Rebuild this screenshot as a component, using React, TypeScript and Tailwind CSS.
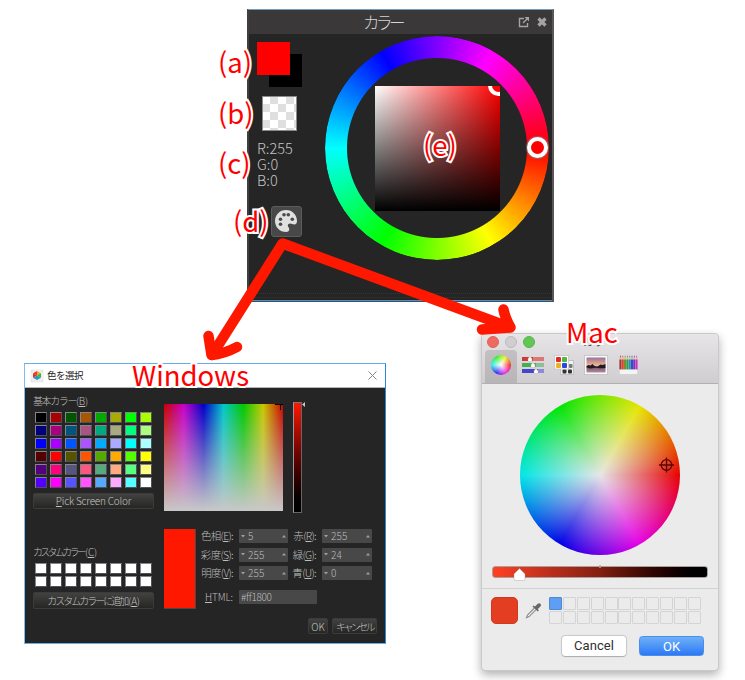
import React from "react";
import clsx from "clsx";

// Qt's 48 standard colours, row by row
const basicColors = [
  "#000000", "#aa0000", "#005500", "#aa5500", "#00aa00", "#aaaa00", "#00ff00", "#aaff00",
  "#00007f", "#aa007f", "#00557f", "#aa557f", "#00aa7f", "#aaaa7f", "#00ff7f", "#aaff7f",
  "#0000ff", "#aa00ff", "#0055ff", "#aa55ff", "#00aaff", "#aaaaff", "#00ffff", "#aaffff",
  "#550000", "#ff0000", "#555500", "#ff5500", "#55aa00", "#ffaa00", "#55ff00", "#ffff00",
  "#55007f", "#ff007f", "#55557f", "#ff557f", "#55aa7f", "#ffaa7f", "#55ff7f", "#ffff7f",
  "#5500ff", "#ff00ff", "#5555ff", "#ff55ff", "#55aaff", "#ffaaff", "#55ffff", "#ffffff",
];

const customColors = Array.from({ length: 16 }, () => "#ffffff");

const hsvRows = [
  { left: "色相", leftKey: "E", leftValue: "5", right: "赤", rightKey: "R", rightValue: "255" },
  { left: "彩度", leftKey: "S", leftValue: "255", right: "緑", rightKey: "G", rightValue: "24" },
  { left: "明度", leftKey: "V", leftValue: "255", right: "青", rightKey: "U", rightValue: "0" },
];

const pencils = ["#a8323c", "#d8482c", "#7c8c30", "#2fa050", "#2c8fa0", "#2c50c8", "#7a34c8", "#d030c0"];

const PaletteIcon = () => (
  <svg width="22" height="22" viewBox="0 0 22 22">
    <path
      d="M11 0C4.9 0 0 4.900 0 11s4.900 11 11 11c2.200 0 3.300-1.200 3.300-2.700 0-1.900-1.500-2-1.500-3.800 0-1.300 1-2 2.400-2 1.500 0 2.300.9 4.100.9 1.700 0 2.700-1.200 2.700-3.400C22 4.900 17.100 0 11 0Z"
      fill="#e0e0e0"
    />
    <g fill="#4a4a4a">
      <circle cx="9" cy="4.800" r="1.800" />
      <circle cx="13.300" cy="4.800" r="1.800" />
      <circle cx="5.500" cy="9.200" r="1.800" />
      <circle cx="17.300" cy="9.200" r="1.800" />
      <circle cx="5.500" cy="14.300" r="1.800" />
    </g>
  </svg>
);

const ColorPanel = () => (
  <section className="absolute left-[247px] top-[9px] flex h-[293px] w-[307px] flex-col border-t border-r-2 border-b border-l-2 border-t-[#6f9fc6] border-r-[#585858] border-b-[#4c4c50] border-l-[#403f40] bg-[#252525]">
    <header className="flex h-6 shrink-0 items-center bg-[#3a3838] pr-[4px]">
      <h2 className="flex-1 pr-[2px] text-center text-[16.500px] leading-6 font-light tracking-[-3.500px] text-[#d4d4d4]">
        カラー
      </h2>
      <svg width="30" height="12" viewBox="0 0 30 12" fill="none" stroke="#a4a4a4">
        <path d="M6 2.500H1.500v8h8V7" strokeWidth="1.400" />
        <path d="M5 7l4-4" strokeWidth="1.400" />
        <path d="M6.500 1h4.500v4.500z" fill="#a4a4a4" stroke="none" />
        <path d="M20.500 2.500l7 7M27.500 2.500l-7 7" strokeWidth="3.200" />
      </svg>
    </header>
    <div className="flex h-[259px] pl-2">
      <div className="w-[68px] pt-2">
        <div className="relative size-[45px]">
          <div className="absolute right-0 bottom-0 size-[33px] bg-black" />
          <div className="absolute top-0 left-0 size-[33px] bg-[#ff0000]" />
        </div>
        <div className="mt-[9px] ml-[5px] size-[35px] border border-[#8a8a8a] bg-[repeating-conic-gradient(#dfdfdf_0_25%,#fff_0_50%)] bg-[size:16px_16px] bg-[position:-1px_-1px]" />
        <div className="mt-[9px] text-[14.500px] leading-4 font-light text-[#c4c4c4]">
          <p>R:255</p>
          <p>G:0</p>
          <p>B:0</p>
        </div>
        <div className="mt-[18px] ml-[14px] flex size-[31px] items-center justify-center rounded-[3px] border border-[#5c5c5c] bg-[#484848] pr-px pb-px">
          <PaletteIcon />
        </div>
      </div>
      <div className="relative mt-[2px] flex size-[224px] items-center justify-center">
        <div className="absolute inset-0 rounded-full bg-[conic-gradient(from_90deg,#f00,#ff0,#0f0,#0ff,#00f,#f0f,#f00)] [mask-image:radial-gradient(circle,transparent_89.500px,#000_90.500px)]" />
        <div className="relative size-[125px] overflow-hidden bg-[linear-gradient(to_top,#000,transparent),linear-gradient(to_right,#fff,#f00)]">
          <div className="absolute -top-[10.500px] -right-[9px] size-[21px] rounded-full border-[4.500px] border-white bg-[#ff0000]" />
        </div>
        <div className="absolute top-[101px] right-px size-[21px] rounded-full border-4 border-white bg-[#ff0000] shadow-[0_0_1px_1px_rgba(130,130,130,0.6)]" />
      </div>
    </div>
    <div className="h-[5px] border-y border-dotted border-[#363636]" />
    <div className="mt-auto h-px bg-[#4292d2]" />
  </section>
);

const SwatchGrid = ({ colors }: { colors: string[] }) => (
  <div className="grid grid-cols-[repeat(8,12px)] gap-x-[3px] gap-y-[2px] pl-px">
    {colors.map((color, i) => (
      <div
        key={i}
        className="h-[11px] border border-t-[#85858c] border-r-[#505058] border-b-[#505058] border-l-[#85858c]"
        style={{ backgroundColor: color }}
      />
    ))}
  </div>
);

const DarkButton = ({ className, children }: { className?: string; children: React.ReactNode }) => (
  <button
    className={clsx(
      "flex items-center justify-center rounded-[2px] border border-[#3b3b3b] bg-linear-to-b from-[#424240] to-[#262625] font-light whitespace-nowrap text-[#c4c4c4]",
      className,
    )}
  >
    {children}
  </button>
);

const SpinBox = ({ value, className }: { value: string; className?: string }) => (
  <div
    className={clsx(
      "flex h-[14px] items-center rounded-[1px] bg-[#484848] px-[2px] text-[10px] leading-[14px] tracking-[0.100px]",
      className,
    )}
  >
    <svg width="4" height="3" viewBox="0 0 4 3">
      <path d="M0 0h4L2 2.500z" fill="#a0a0a0" />
    </svg>
    <span className="ml-[3px] flex-1">{value}</span>
    <svg width="4" height="3" viewBox="0 0 4 3">
      <path d="M0 2.500h4L2 0z" fill="#a0a0a0" />
    </svg>
  </div>
);

const WindowsDialog = () => (
  <section className="absolute left-[24px] top-[363px] flex h-[281px] w-[362px] flex-col border border-t-[#68ade8] border-r-[#2b8ad8] border-b-[#68ade8] border-l-[#80bcec] bg-[#252525]">
    <header className="flex h-6 shrink-0 items-center border-b border-[#b5b5b5] bg-white pr-[8px] pl-[6px]">
      <div className="flex size-[12px] items-center justify-center rounded-[2px] bg-[#eeeeee] shadow-[0_0_1px_#999]">
        <svg width="8" height="9" viewBox="0 0 8 9">
          <path d="M4 0l4 2.200L4 4.500z" fill="#f3a51c" />
          <path d="M0 2.200L4 0v4.500z" fill="#e23a3a" />
          <path d="M0 2.200l4 2.300-4 2.300z" fill="#e82c1c" />
          <path d="M8 2.200v4.600L4 4.500z" fill="#30b440" />
          <path d="M0 6.800l4-2.300V9z" fill="#3c8ad8" />
          <path d="M8 6.800L4 9V4.500z" fill="#18a8a0" />
        </svg>
      </div>
      <h2 className="ml-[4px] flex-1 text-[9.500px] tracking-[-0.5px] text-[#222]">色を選択</h2>
      <svg width="9" height="9" viewBox="0 0 9 9" stroke="#858585" strokeWidth="1">
        <path d="M.5.5l8 8M8.500.5l-8 8" />
      </svg>
    </header>
    <div className="flex flex-1 pl-[9px] font-light whitespace-nowrap text-[#bdbdbd]">
      <div className="w-[130px] pt-[6px]">
        <p className="-ml-px h-[12px] text-[10px] leading-[14px] tracking-[-1.400px]">
          基本カラー
          <span className="tracking-[-0.3px]">
            (<u>B</u>)
          </span>
        </p>
        <div className="mt-[6px]">
          <SwatchGrid colors={basicColors} />
        </div>
        <DarkButton className="mt-[5px] -ml-px h-[16px] w-[121px] pb-px text-[10px] tracking-[-0.2px]">
          <span>
            <u>P</u>ick Screen Color
          </span>
        </DarkButton>
        <p className="mt-[37px] -ml-px h-[12px] text-[10px] leading-[12px] tracking-[-2.700px]">
          カスタムカラー
          <span className="ml-px tracking-[-0.3px]">
            (<u>C</u>)
          </span>
        </p>
        <div className="mt-[5px]">
          <SwatchGrid colors={customColors} />
        </div>
        <DarkButton className="mt-[5px] -ml-px h-[17px] w-[121px] text-[10px] tracking-[-2px]">
          <span>
            カスタムカラーに追加
            <span className="ml-px tracking-[-0.3px]">
              (<u>A</u>)
            </span>
          </span>
        </DarkButton>
      </div>
      <div className="w-[213px] pt-[14px]">
        <div className="flex">
          <div className="mt-[2px] h-[107px] w-[119px] bg-[linear-gradient(to_top,#c8c8c8,transparent),linear-gradient(to_right,#c80000,#c800c8,#0000c8,#00c8c8,#00c800,#c8c800,#c80000)]">
            <svg className="block" width="119" height="7" viewBox="0 0 119 7" stroke="#000">
              <path d="M111 .5h8M116.500 0v6" />
            </svg>
          </div>
          <div className="ml-[10px] h-[111px] w-[9px] border border-t-[#777] border-r-[#666] border-b-[#666] border-l-[#999] bg-linear-to-b from-[#ff1800] to-black" />
          <svg width="3" height="5" viewBox="0 0 3 5">
            <path d="M3 0v5L0 2.500z" fill="#c8c8c8" />
          </svg>
        </div>
        <div className="mt-[16px] flex">
          <div className="h-[80px] w-[32px] border-r border-b border-[#484848] bg-[#ff1800]" />
          <div className="flex flex-col gap-[4.700px] text-[10.500px] leading-[13px] tracking-[-0.700px]">
            {hsvRows.map((row) => (
              <div key={row.leftKey} className="flex h-[14px]">
                <span className="w-[37px] text-right">
                  {row.left}(<u>{row.leftKey}</u>):
                </span>
                <SpinBox value={row.leftValue} className="ml-[6px] w-[49px]" />
                <span className="w-[28px] text-right">
                  {row.right}(<u>{row.rightKey}</u>):
                </span>
                <SpinBox value={row.rightValue} className="ml-[6px] w-[50px]" />
              </div>
            ))}
            <div className="mt-[5px] flex h-[14px] text-[10px] leading-[14px]">
              <span className="w-[37px] text-right tracking-[-0.1px]">
                <u>H</u>TML:
              </span>
              <span className="ml-[6px] w-[78px] rounded-[1px] bg-[#484848] pl-[2px] tracking-[-0.300px]">
                #ff1800
              </span>
            </div>
          </div>
        </div>
        <div className="mt-[9px] flex justify-end gap-[4px]">
          <DarkButton className="h-[16px] w-[20px] text-[10px]">OK</DarkButton>
          <DarkButton className="h-[16px] w-[45px] text-[10px] tracking-[-2.600px]">キャンセル</DarkButton>
        </div>
      </div>
    </div>
  </section>
);

const SlidersIcon = () => (
  <svg width="22" height="18" viewBox="0 0 22 18">
    <path d="M0 1h22v4H0z" fill="#d03838" />
    <path d="M0 7h22v4H0z" fill="#42b04c" />
    <path d="M0 13h22v4H0z" fill="#4646c8" />
    <path d="M11 1h11v4H11z" fill="#e8a0a0" fillOpacity=".6" />
    <path d="M14 7h8v4h-8zM16 13h6v4h-6z" fill="#d0d0e8" fillOpacity=".5" />
    <g fill="#fff" stroke="#aaa" strokeWidth=".4">
      <path d="M6 5.500v-3l2-2 2 2v3z" />
      <path d="M9 11.500v-3l2-2 2 2v3z" />
      <path d="M12 17.500v-3l2-2 2 2v3z" />
    </g>
  </svg>
);

const PalettesIcon = () => (
  <svg width="20" height="20" viewBox="0 0 20 20">
    <path d="M6.500 5.500h13v14h-13z" fill="#f0f0f0" stroke="#aaa" strokeWidth=".6" />
    <g fill="#333">
      <rect x="8.500" y="14.500" width="4" height="4" rx="1" />
      <rect x="14" y="14.500" width="4" height="4" rx="1" />
      <rect x="15" y="9" width="3.500" height="4" rx="1" fill="#777" />
    </g>
    <path d="M.5.500h14v13.500H.5z" fill="#fff" stroke="#b8b8b8" strokeWidth=".6" />
    <rect x="2" y="2" width="5" height="5" rx="1" fill="#e02828" />
    <rect x="8" y="2" width="5" height="5" rx="1" fill="#50b840" />
    <rect x="2" y="8" width="5" height="5" rx="1" fill="#f0b020" />
    <rect x="8" y="8" width="5" height="5" rx="1" fill="#2848d8" />
  </svg>
);

const PictureIcon = () => (
  <svg width="24" height="20" viewBox="0 0 24 20">
    <defs>
      <linearGradient id="sunset" x1="0" x2="0" y1="0" y2="1">
        <stop offset="0" stopColor="#94749c" />
        <stop offset=".35" stopColor="#d89a90" />
        <stop offset=".55" stopColor="#f4c080" />
        <stop offset=".7" stopColor="#7c6078" />
        <stop offset="1" stopColor="#b88c98" />
      </linearGradient>
    </defs>
    <path d="M.5.500h23v19H.5z" fill="#fafafa" stroke="#b0b0b0" strokeWidth=".6" />
    <path d="M2.500 2.500h19v15h-19z" fill="url(#sunset)" />
    <path d="M2.500 11l2-1 2 .5 2-1.500 2 2 3 .5 3-2 2 .5 3-1v4l-5 .3-5-.5-5 .6-4-.8z" fill="#20182c" />
  </svg>
);

const PencilsIcon = () => (
  <svg width="19" height="20" viewBox="0 0 19 20">
    {pencils.map((color, i) => (
      <g key={color} transform={`translate(${0.4 + i * 2.3} 0)`}>
        <path d="M0 4.500L1.100.5 2.200 4.500z" fill="#d8c0a0" />
        <path d="M.5 2.200L1.100.3 1.700 2.200z" fill={color} />
        <path d="M0 4.500h2.100V15H0z" fill={color} />
      </g>
    ))}
    <path d="M.3 14.500h18.400v5H.3z" fill="#f4f4f4" stroke="#c4c4c4" strokeWidth=".5" />
  </svg>
);

const MacPicker = () => (
  <section className="absolute left-[481px] top-[333px] flex h-[338px] w-[238px] flex-col rounded-[4px] border border-[#c9c9c9] bg-[#ebebeb] shadow-[0_4px_10px_rgba(0,0,0,0.3)]">
    <header className="h-[50px] shrink-0 rounded-t-[4px] border-b border-[#b1afb2] bg-linear-to-b from-[#e7e5e7] to-[#cfcdd0]">
      <div className="flex h-[16px] items-center pl-[5px]">
        <div className="size-[12px] rounded-full border border-[#dd6358] bg-[#ed6b60]" />
        <div className="ml-[6px] size-[12px] rounded-full border border-[#bcbabc] bg-[#d0ced0]" />
        <div className="ml-[6px] size-[12px] rounded-full border border-[#56b64b] bg-[#61c654]" />
        <h2 className="ml-[48px] text-[10.500px] leading-[16px] text-[#505050]">カラー</h2>
      </div>
      <nav className="flex h-[33px] items-center pl-[3px]">
        <div className="flex h-[33px] w-[32px] items-center justify-center rounded-t-[4px] bg-linear-to-b from-[#c2c0c3] to-[#b7b5b8] pb-[4px]">
          <div className="size-[20px] rounded-full bg-[radial-gradient(closest-side,#fff,transparent),conic-gradient(from_90deg,#e22,#e2e,#22e,#2ee,#2e2,#ee2,#e22)]" />
        </div>
        <div className="flex h-[33px] items-center pb-[4px]">
          <div className="ml-[5px]">
            <SlidersIcon />
          </div>
          <div className="ml-[10px]">
            <PalettesIcon />
          </div>
          <div className="ml-[10px]">
            <PictureIcon />
          </div>
          <div className="ml-[11px]">
            <PencilsIcon />
          </div>
        </div>
      </nav>
    </header>
    <div className="flex h-[205px] flex-col items-center border-b border-[#d2d2d2] pt-[11px]">
      <div className="size-[160px] rounded-full bg-[radial-gradient(closest-side,#e6e6e6,transparent),conic-gradient(from_90deg,#e60000,#e600e6,#0000e6,#00e6e6,#00e600,#e6e600,#e60000)]">
        <svg className="block" width="160" height="160" viewBox="0 0 160 160" fill="none" stroke="#5c0404" strokeWidth="1.300">
          <circle cx="146.500" cy="70" r="5.300" />
          <path d="M139 70h15M146.500 62.500v15" />
        </svg>
      </div>
      <div className="mt-[11px] h-[12px] w-[216px] rounded-[3px] border border-[#a9a09e] bg-linear-to-r from-[#ff4124] via-[#832012] to-black">
        <svg className="block overflow-visible" width="214" height="14" viewBox="0 0 214 14">
          <path d="M107-2v3" stroke="#aaa" strokeWidth="1.500" />
          <path d="M21 7l5.500-5.500L32 7v5q0 1.500-1.500 1.500h-8q-1.500 0-1.500-1.500z" fill="#fff" stroke="#999" strokeWidth=".4" />
        </svg>
      </div>
    </div>
    <div className="flex pt-[8px] pl-[9px]">
      <div className="size-[27px] rounded-[5px] border border-[#cf3a20] bg-[#e33e22]" />
      <svg className="mt-[5px] ml-[7px]" width="17" height="17" viewBox="0 0 17 17">
        <path d="M9.500 6L2.500 13l-1 2.800 2.600-1.200 7-7" fill="#f4f4f4" stroke="#8c8c8c" strokeWidth="1.100" />
        <path d="M7.500 4.500l1-1 1.500 1L12.500 2q1.500-1.500 3-.3 1.300 1.500-.3 3L12.800 7l1 1.500-1 1z" fill="#686868" />
      </svg>
      <div className="ml-[7px] grid grid-cols-[repeat(11,13px)] gap-x-[0.900px] gap-y-px">
        {Array.from({ length: 22 }, (_, i) => (
          <div
            key={i}
            className={clsx(
              "h-[13px] rounded-[1px] border",
              i === 0 ? "border-[#5088d4] bg-[#5f9ff3]" : "border-[#d4d4d4]",
            )}
          />
        ))}
      </div>
    </div>
    <div className="mt-[12px] flex justify-end gap-[13px] pr-[14px] text-[13px] font-[Roboto,sans-serif]">
      <button className="h-[20px] w-[64px] rounded-[3.500px] bg-white leading-[20px] tracking-[0.100px] text-[#303030] shadow-[0_0_1px_1px_rgba(0,0,0,0.15),0_1px_1px_rgba(0,0,0,0.15)]">
        Cancel
      </button>
      <button className="h-[20px] w-[65px] rounded-[3.500px] border border-[#4b8de8] bg-linear-to-b from-[#6eb0f6] to-[#2c78f6] leading-[19px] text-white">
        OK
      </button>
    </div>
  </section>
);

const Label = ({ className, children }: { className: string; children: React.ReactNode }) => (
  <span
    className={clsx(
      "absolute text-[27.500px] leading-[40px] whitespace-nowrap text-[#ff0000] [-webkit-text-stroke:4px_#fff] [paint-order:stroke_fill]",
      className,
    )}
  >
    {children}
  </span>
);

export default function App() {
  return (
    <main className="relative h-[680px] w-[745px] overflow-hidden bg-white font-['Noto_Sans_CJK_JP',sans-serif]">
      <ColorPanel />
      <WindowsDialog />
      <MacPicker />
      <svg
        className="absolute inset-0"
        width="745"
        height="680"
        viewBox="0 0 745 680"
        fill="none"
        stroke="#ff1800"
        strokeWidth="10.500"
        strokeLinecap="round"
        strokeLinejoin="round"
      >
        <path d="M212 355L282.500 243.500 509 327" />
        <path d="M208.500 336L211.500 355Q224 354 237 347" />
        <path d="M503.500 309.500Q505 318 510.500 327.500L482 329.500" />
      </svg>
      <Label className="left-[218px] top-[41px]">(a)</Label>
      <Label className="left-[218px] top-[92px]">(b)</Label>
      <Label className="left-[218px] top-[142px]">(c)</Label>
      <Label className="left-[233px] top-[200px]">(d)</Label>
      <Label className="left-[423px] top-[124px]">(e)</Label>
      <Label className="left-[132px] top-[354px]">Windows</Label>
      <Label className="left-[566px] top-[311px]">Mac</Label>
    </main>
  );
}
